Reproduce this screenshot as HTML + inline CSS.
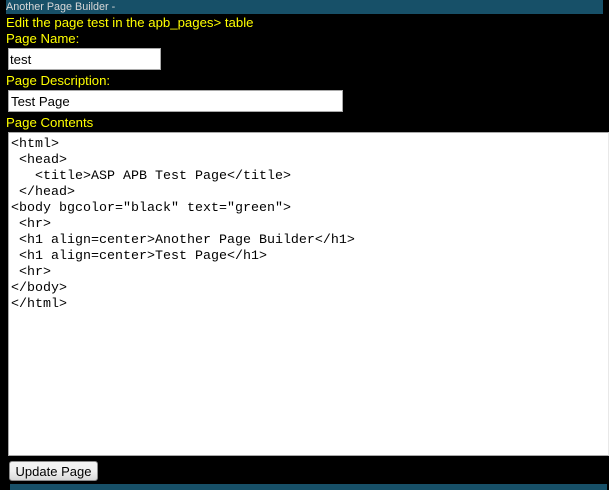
<!DOCTYPE html>
<html>
<head>
<meta charset="utf-8">
<style>
html,body{margin:0;padding:0;width:609px;height:490px;overflow:hidden;background:#000;}
div,pre{position:absolute;margin:0;white-space:pre;box-sizing:border-box;}
.y{color:#ff0;font:13.2px/16px "Liberation Sans",Arial,sans-serif;left:6px;}
.box{background:#fff;border:1px solid #a9a9a9;}
.t{font:13.2px/16px "Liberation Sans",Arial,sans-serif;color:#000;}
</style>
</head>
<body>
<div style="left:6px;top:0;width:597px;height:14px;background:#175068;color:#d8d8d8;font:10.8px/14px 'Liberation Sans',Arial,sans-serif;">Another Page Builder -</div>
<div class="y" style="top:15px;">Edit the page test in the apb_pages&gt; table</div>
<div class="y" style="top:31px;">Page Name:</div>
<div class="box" style="left:8px;top:48px;width:153px;height:22px;"></div>
<div class="t" style="left:10px;top:52px;">test</div>
<div class="y" style="top:73px;">Page Description:</div>
<div class="box" style="left:8px;top:90px;width:335px;height:22px;"></div>
<div class="t" style="left:11px;top:94px;">Test Page</div>
<div class="y" style="top:115px;">Page Contents</div>
<div class="box" style="left:8px;top:132px;width:601px;height:324px;border-right-color:#e8e8e8;"></div>
<pre style="left:11px;top:137px;font:13.33px/16px 'Liberation Mono','Courier New',monospace;color:#000;">&lt;html&gt;
 &lt;head&gt;
   &lt;title&gt;ASP APB Test Page&lt;/title&gt;
 &lt;/head&gt;
&lt;body bgcolor="black" text="green"&gt;
 &lt;hr&gt;
 &lt;h1 align=center&gt;Another Page Builder&lt;/h1&gt;
 &lt;h1 align=center&gt;Test Page&lt;/h1&gt;
 &lt;hr&gt;
&lt;/body&gt;
&lt;/html&gt;</pre>
<div style="left:9px;top:461px;width:89px;height:20px;border:1px solid #8a8a8a;border-radius:3px;background:linear-gradient(#f4f4f4,#f0f0f0 50%,#d8d8d8);color:#000;font:13px/20px 'Liberation Sans',Arial,sans-serif;text-align:center;">Update Page</div>
<div style="left:10px;top:484px;width:597px;height:6px;background:#175068;"></div>
</body>
</html>
